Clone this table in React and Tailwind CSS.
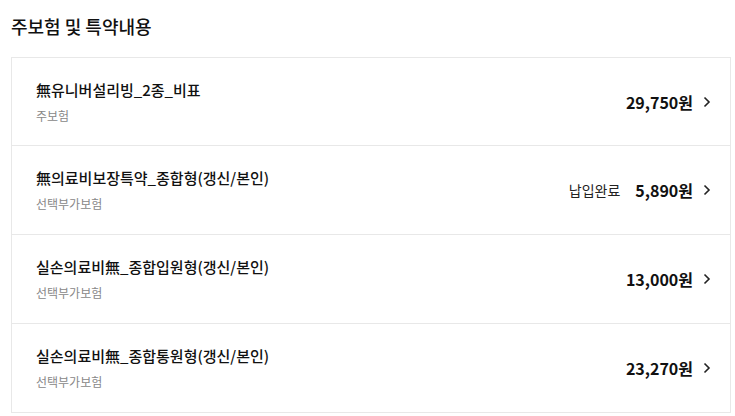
import React from "react";

const items = [
  { name: "無유니버설리빙_2종_비표", type: "주보험", price: "29,750원" },
  { name: "無의료비보장특약_종합형(갱신/본인)", type: "선택부가보험", price: "5,890원", status: "납입완료" },
  { name: "실손의료비無_종합입원형(갱신/본인)", type: "선택부가보험", price: "13,000원" },
  { name: "실손의료비無_종합통원형(갱신/본인)", type: "선택부가보험", price: "23,270원" },
];

function Chevron() {
  return (
    <svg width="8" height="12" viewBox="0 0 8 12" className="ml-[10px]">
      <path d="M1.5 1.5 L6 6 L1.5 10.5" fill="none" stroke="#222" strokeWidth="1.6" />
    </svg>
  );
}

export default function App() {
  return (
    <div className="w-[735px] h-[416px] bg-white overflow-hidden" style={{ fontFamily: '"Noto Sans CJK KR", "Noto Sans", sans-serif' }}>
      <div className="pl-[11px] pt-[13px] h-[57px]">
        <h2 className="text-[18px] leading-[26px] font-medium text-[#111]">주보험 및 특약내용</h2>
      </div>
      <div className="ml-[11px] w-[720px] border border-[#e8e8e8]">
        {items.map((it, i) => (
          <div key={i} className={`flex items-center pl-[24px] pr-[19px] ${i > 0 ? "h-[89px] border-t border-[#e8e8e8]" : "h-[87px]"}`}>
            <div className="flex-1 flex flex-col">
              <div className="text-[15px] leading-[20px] font-medium text-[#111]">{it.name}</div>
              <div className="mt-[8px] text-[12px] leading-[16px] text-[#888]">{it.type}</div>
            </div>
            <div className="flex items-center">
              {it.status && <span className="text-[14px] text-[#222] mr-[15px]">{it.status}</span>}
              <span className="text-[16px] font-semibold text-[#111]">{it.price}</span>
              <Chevron />
            </div>
          </div>
        ))}
      </div>
    </div>
  );
}
